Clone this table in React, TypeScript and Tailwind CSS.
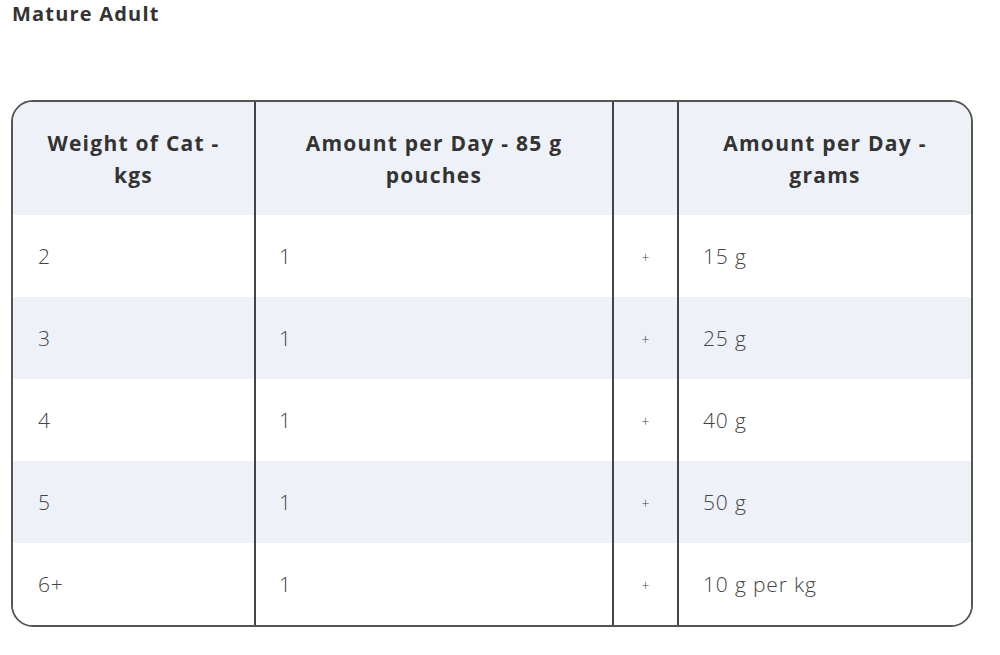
import React from "react";

const rows = [
  ["2", "1", "15 g"],
  ["3", "1", "25 g"],
  ["4", "1", "40 g"],
  ["5", "1", "50 g"],
  ["6+", "1", "10 g per kg"],
];

export default function App() {
  const head = "h-[113px] bg-[#eef2f8] flex items-center justify-center text-center text-[21px] font-bold text-[#333] leading-[32px] tracking-[0.06em] px-4";
  const body = "h-[82px] flex items-center text-[21px] font-light text-[#444] tracking-[0.04em]";
  return (
    <div className="w-[1000px] h-[655px] bg-white pl-[11px] pt-[2px]" style={{ fontFamily: '"Open Sans", "DejaVu Sans", sans-serif' }}>
      <h2 className="text-[20px] font-bold text-[#333] leading-[24px] pl-[1px] tracking-[0.06em]">Mature Adult</h2>
      <div className="mt-[74px] w-[962px] border-2 border-[#555] rounded-[22px] overflow-hidden">
        <div className="grid grid-cols-[243px_358px_65px_1fr]">
          <div className={`${head} border-r-2 border-[#444]`}>
            Weight of Cat -<br />kgs
          </div>
          <div className={`${head} border-r-2 border-[#444]`}>
            Amount per Day - 85 g<br />pouches
          </div>
          <div className="h-[113px] bg-[#eef2f8] border-r-2 border-[#444]" />
          <div className={head}>
            Amount per Day -<br />grams
          </div>
          {rows.map((r, i) => {
            const bg = i % 2 === 0 ? "bg-white" : "bg-[#eef2f8]";
            return (
              <React.Fragment key={i}>
                <div className={`${bg} ${body} border-r-2 border-[#444] pl-[25px] pt-[2px]`}>{r[0]}</div>
                <div className={`${bg} ${body} border-r-2 border-[#444] pl-[23px] pt-[2px]`}>{r[1]}</div>
                <div className={`${bg} h-[82px] border-r-2 border-[#444] flex items-center justify-center pt-[2px] text-[14px] font-light text-[#444]`}>+</div>
                <div className={`${bg} ${body} pl-[24px] pt-[2px]`}>{r[2]}</div>
              </React.Fragment>
            );
          })}
        </div>
      </div>
    </div>
  );
}
